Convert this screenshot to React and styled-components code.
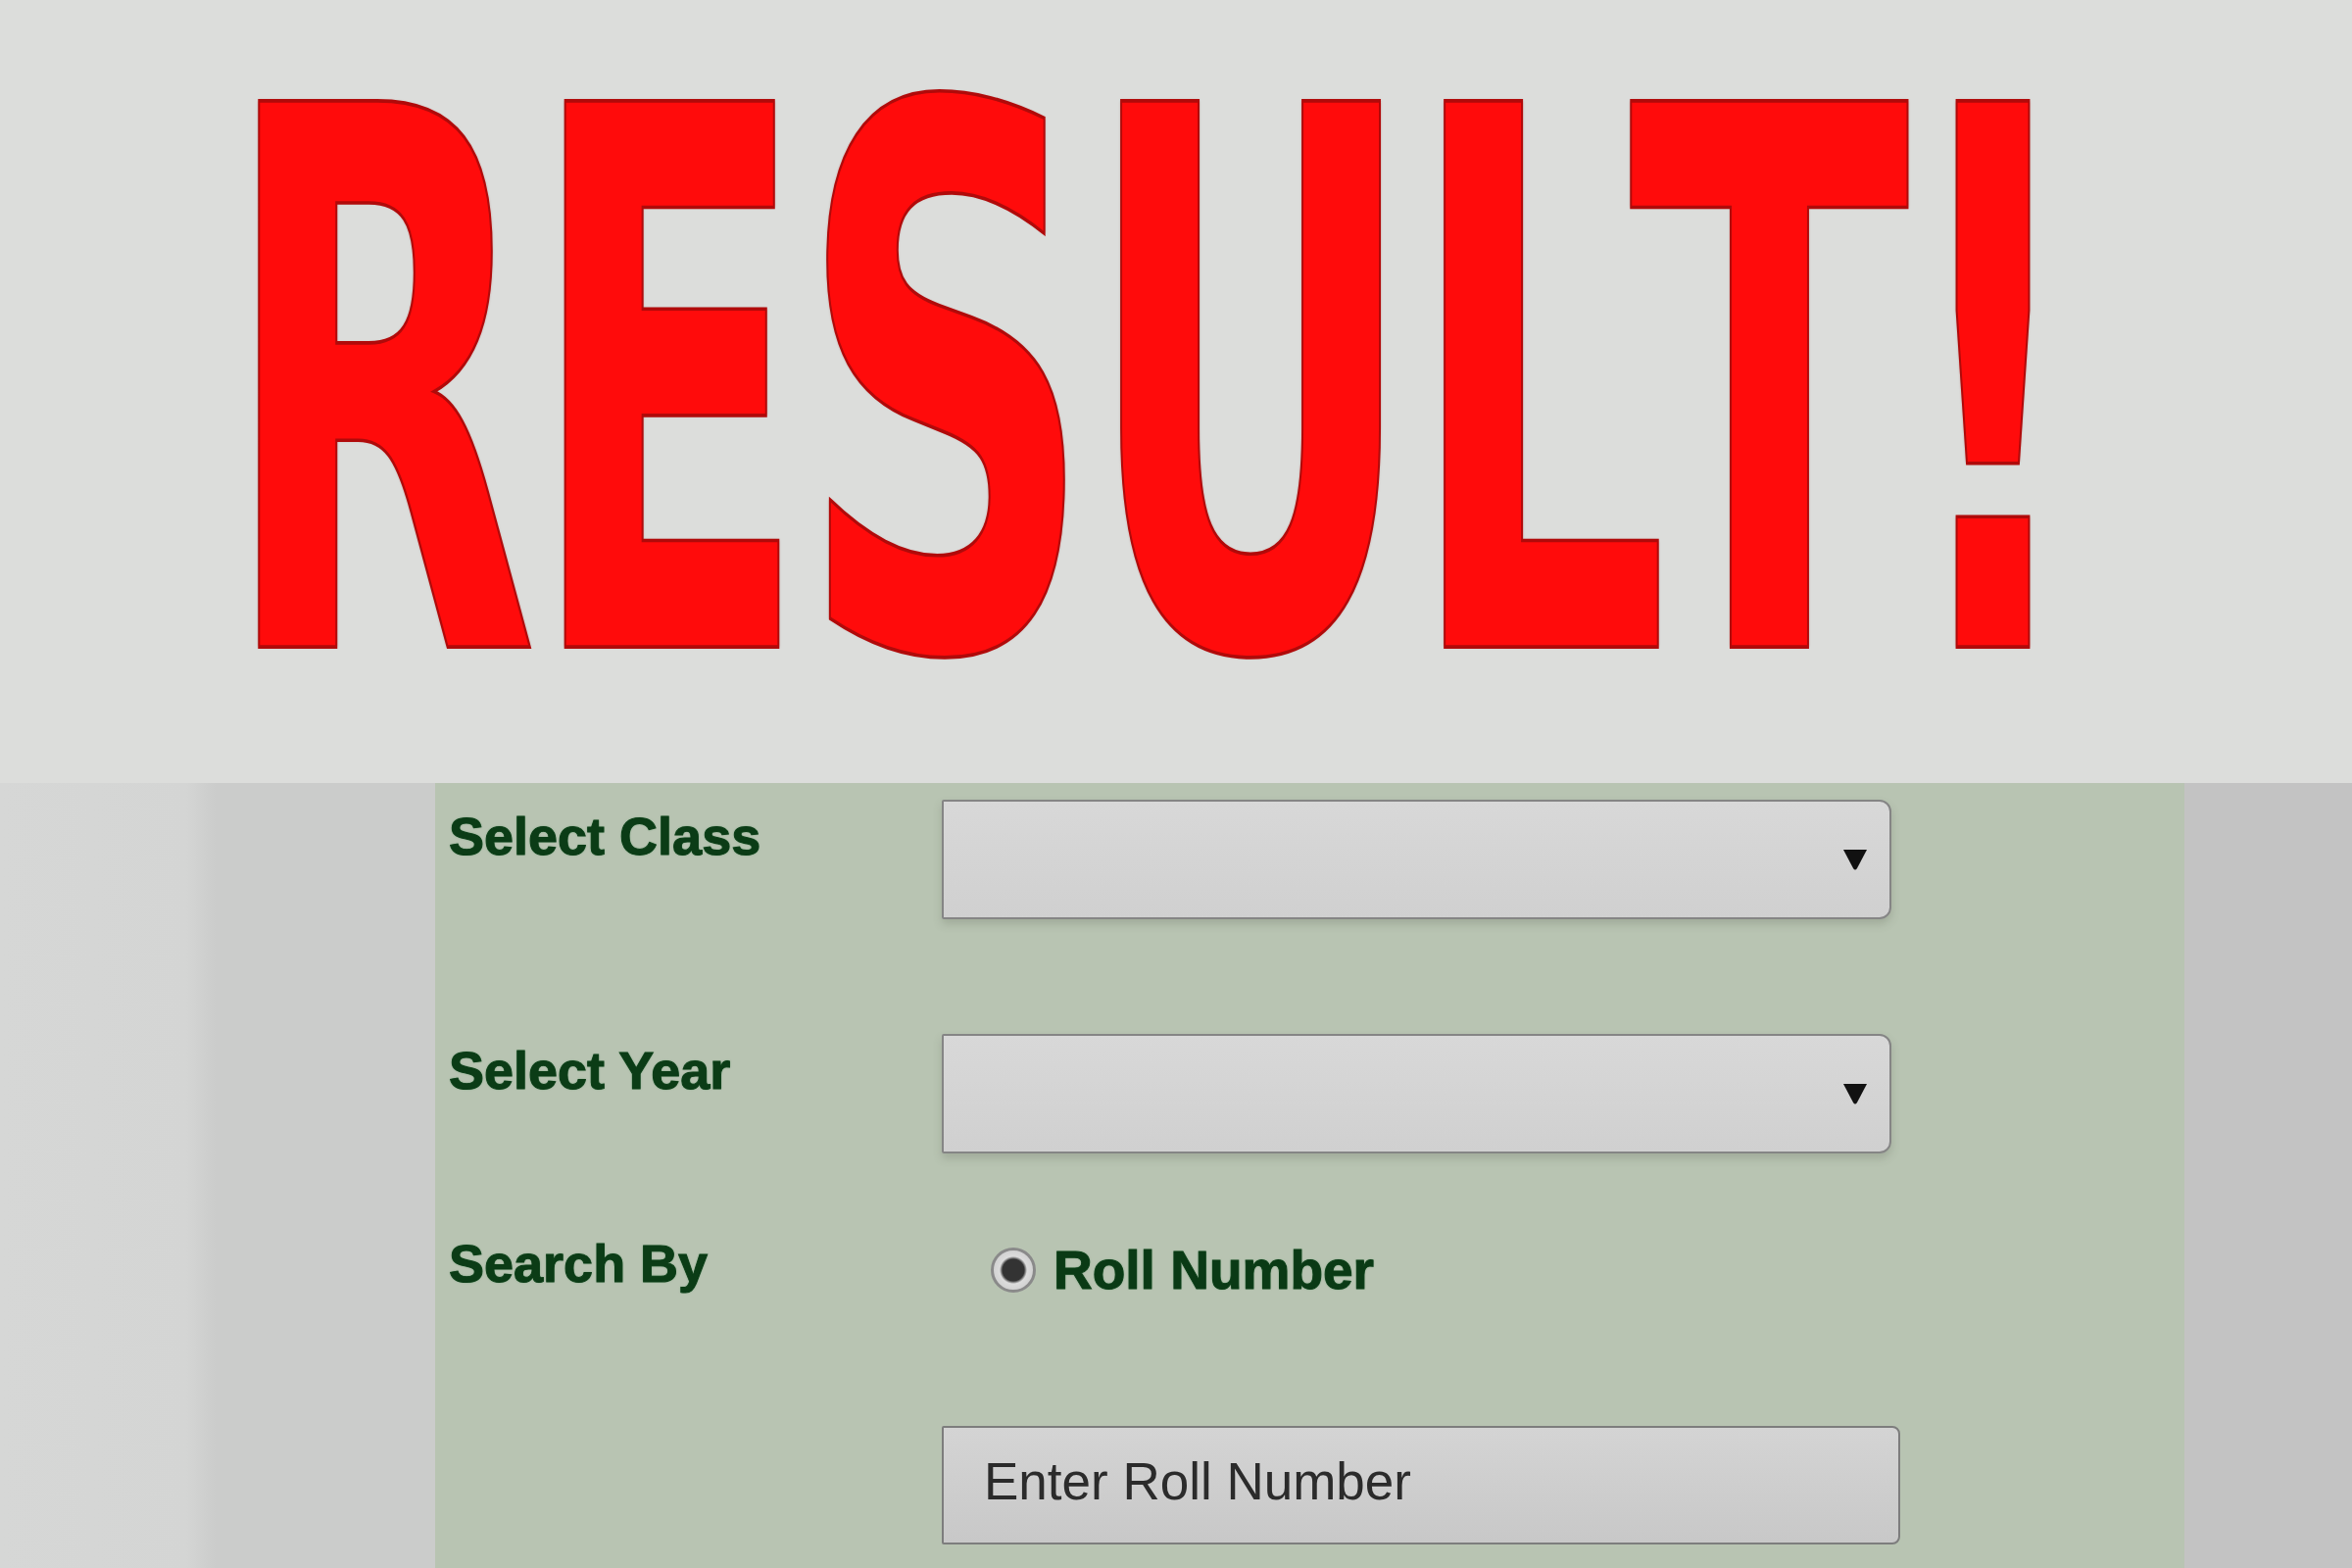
import React from 'react'
import styled, { createGlobalStyle } from 'styled-components';

const Global = createGlobalStyle`
  html, body {
    margin: 0;
    padding: 0;
    width: 2400px;
    height: 1600px;
    overflow: hidden;
    background: #dcdddb;
  }
`;

const Page = styled.div`
  width: 2400px;
  height: 1600px;
  display: flex;
  flex-direction: column;
`;

const Banner = styled.div`
  height: 799px;
  background: #dcdddb;
  display: flex;
  justify-content: center;
  align-items: flex-start;
  padding: 14px 56px 0 0;
  box-sizing: border-box;
`;

// narrow poster look: regular width font stretched upward
const Title = styled.h1`
  margin: 0;
  display: inline-block;
  font-family: "DejaVu Sans", sans-serif;
  font-weight: bold;
  font-size: 420px;
  line-height: 1;
  letter-spacing: -11px;
  font-kerning: none;
  color: #ff0b0b;
  -webkit-text-stroke: 2px #b00a0a;
  text-shadow: 0 0 2px rgba(140, 0, 0, 0.6);
  white-space: nowrap;
  transform: scaleY(1.82);
  transform-origin: center top;
`;

const Tuck = styled.span`
  margin-left: -30px;
`;

const Lower = styled.div`
  flex: 1;
  display: flex;
`;

const Strip = styled.div`
  width: ${p => p.$w}px;
  background: ${p => p.$bg};
`;

const Panel = styled.div`
  flex: 1;
  background: #b8c4b2;
  padding-left: 14px;
  display: flex;
  flex-direction: column;
`;

const Row = styled.div`
  display: grid;
  grid-template-columns: 503px auto;
  align-items: start;
  margin-top: ${p => p.$mt}px;
`;

const Label = styled.div`
  padding-top: 6px;
  font-family: "Liberation Sans", Arial, sans-serif;
  font-weight: bold;
  font-size: 54px;
  color: #0b3c16;
  -webkit-text-stroke: 1px #0b3c16;
  text-shadow: 0 0 2px rgba(30, 120, 55, 0.7);
`;

const SelectBox = styled.div`
  width: 969px;
  height: 122px;
  box-sizing: border-box;
  border: 2px solid #858585;
  border-radius: 2px 12px 12px 2px;
  background: linear-gradient(#d8d8d8, #d0d0d0);
  box-shadow: 0 5px 8px rgba(90, 100, 85, 0.25);
  display: flex;
  align-items: center;
  justify-content: flex-end;
  padding-right: 22px;
`;

const Option = styled.div`
  display: flex;
  align-items: center;
  gap: 18px;
  padding: 12px 0 0 50px;
`;

const Radio = styled.span`
  width: 46px;
  height: 46px;
  box-sizing: border-box;
  border-radius: 50%;
  border: 3px solid #8a8a8a;
  background: radial-gradient(circle, #333 0 11px, #6a6a6a 12px, #dcdcdc 14px, #c4c4c4 100%);
`;

const OptionText = styled(Label)`
  padding-top: 0;
  font-size: 55px;
  color: #0a3a15;
`;

const TextInput = styled.div`
  width: 978px;
  height: 121px;
  box-sizing: border-box;
  border: 2px solid #7d7d7d;
  border-radius: 2px 8px 8px 2px;
  background: linear-gradient(#d4d4d4, #c8c8c8);
  display: flex;
  align-items: center;
  padding: 0 0 8px 41px;
  font-family: "Liberation Sans", Arial, sans-serif;
  font-size: 53px;
  color: #2b2b2b;
`;

const Arrow = () => (
  <svg width="26" height="24" viewBox="0 0 26 24">
    <path d="M1 2 H25 L15 21 Q13 24 11 21 Z" fill="#111" />
  </svg>
);

const Select = () => (
  <SelectBox>
    <Arrow />
  </SelectBox>
);

export default function App() {
  return (
    <Page>
      <Global />
      <Banner>
        <Title>RESUL<Tuck>T!</Tuck></Title>
      </Banner>
      <Lower>
        <Strip $w={444} $bg="linear-gradient(90deg, #d6d7d6 0, #d4d5d4 190px, #cbcccb 220px, #cbcccb 100%)" />
        <Panel>
          <Row $mt={17}>
            <Label>Select Class</Label>
            <Select />
          </Row>
          <Row $mt={117}>
            <Label>Select Year</Label>
            <Select />
          </Row>
          <Row $mt={75}>
            <Label>Search By</Label>
            <Option>
              <Radio />
              <OptionText>Roll Number</OptionText>
            </Option>
          </Row>
          <Row $mt={127}>
            <span />
            <TextInput>Enter Roll Number</TextInput>
          </Row>
        </Panel>
        <Strip $w={171} $bg="#c3c3c3" />
      </Lower>
    </Page>
  )
}
